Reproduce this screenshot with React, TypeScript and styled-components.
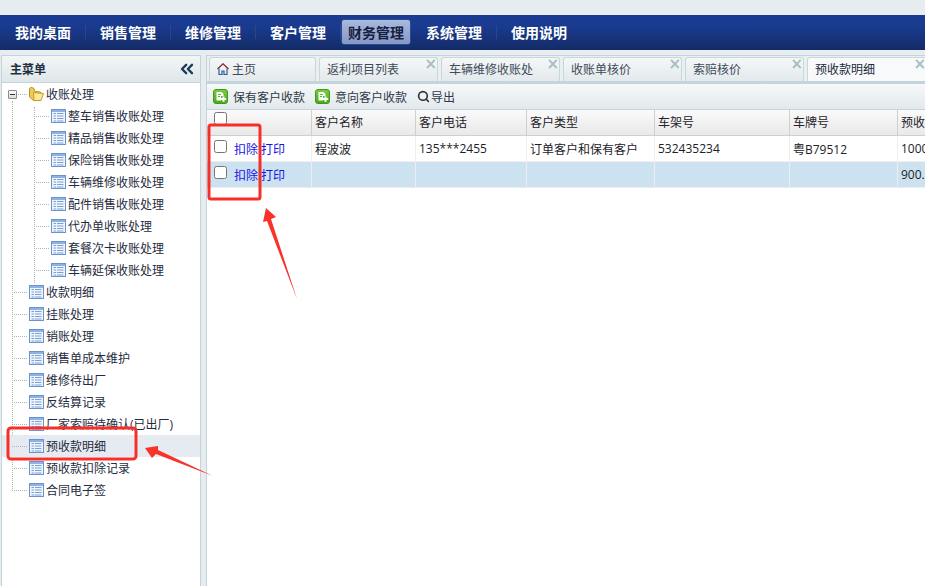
import React from "react";
import styled, { createGlobalStyle } from "styled-components";
import { ChevronsLeft, Search } from "lucide-react";

const GlobalStyle = createGlobalStyle`
  html, body {
    margin: 0;
    padding: 0;
    height: 100%;
    overflow: hidden;
    background: #e6ecef;
  }
  * { box-sizing: border-box; }
  #root {
    height: 586px;
    font-family: "Open Sans", "Noto Sans CJK SC", sans-serif;
    font-size: 12px;
    color: #1c2a3a;
  }
`;

const Page = styled.div`
  position: relative;
  width: 925px;
  height: 586px;
  padding-top: 15px;
  overflow: hidden;
`;

const NavBar = styled.nav`
  height: 35px;
  display: flex;
  align-items: center;
  padding-left: 7px;
  background: linear-gradient(#1a3c94, #1a3a8e 35%, #132b66);
`;

const NavItem = styled.div<{ $active?: boolean; $last?: boolean }>`
  position: relative;
  width: ${({ $active }) => ($active ? "70px" : "85px")};
  height: 26px;
  margin: ${({ $active }) => ($active ? "-1px 7px 0 -6px" : "-1px 0 0 0")};
  display: flex;
  align-items: center;
  padding-left: ${({ $active }) => ($active ? "6px" : "8px")};
  font-size: 14px;
  font-weight: 700;
  white-space: nowrap;
  color: ${({ $active }) => ($active ? "#14203c" : "#fff")};
  border-radius: 3px;
  background: ${({ $active }) =>
    $active ? "linear-gradient(#a9bade, #8597c6)" : "none"};
  border: ${({ $active }) => ($active ? "1px solid #2a4a90" : "none")};

  &::after {
    content: "";
    display: ${({ $active, $last }) => ($active || $last ? "none" : "block")};
    position: absolute;
    right: 6px;
    top: 6px;
    height: 14px;
    width: 1px;
    background: #2a4788;
  }
`;

const Body = styled.div`
  height: 536px;
  display: flex;
  padding: 5px 0 0 1px;
`;

const SidePanel = styled.aside`
  width: 200px;
  flex: none;
  background: #fff;
  border: 1px solid #c3d5da;
  border-bottom: none;
  display: flex;
  flex-direction: column;
`;

const SideHead = styled.div`
  height: 27px;
  flex: none;
  display: flex;
  align-items: center;
  justify-content: space-between;
  padding: 0 3px 0 8px;
  font-weight: 700;
  font-size: 12px;
  color: #203040;
  background: linear-gradient(#f2f6f7, #dfe7ea);
  border-bottom: 1px solid #c3d5da;
`;

const TreeBody = styled.div`
  position: relative;
`;

const TreeRow = styled.div<{ $level: number; $active?: boolean }>`
  position: relative;
  height: 22px;
  display: flex;
  align-items: center;
  gap: 2px;
  padding-left: ${({ $level }) => ($level === 2 ? "49px" : "27px")};
  white-space: nowrap;
  color: #1f2c3e;
  background: ${({ $active }) => ($active ? "#e6ebf2" : "none")};

  &::before {
    content: "";
    position: absolute;
    left: ${({ $level }) => ($level === 2 ? "32px" : "10px")};
    width: 15px;
    top: 11px;
    border-top: 1px dotted #b4b4b4;
  }
`;

const TreeLine = styled.div<{ $left: number; $top: number; $height: number }>`
  position: absolute;
  left: ${({ $left }) => $left}px;
  top: ${({ $top }) => $top}px;
  height: ${({ $height }) => $height}px;
  border-left: 1px dotted #b4b4b4;
`;

const ToggleBox = styled.span`
  position: absolute;
  left: 6px;
  top: 7px;
  width: 9px;
  height: 9px;
  z-index: 1;
  background: linear-gradient(#fff, #dcdcdc);
  border: 1px solid #8a8a8a;
  border-radius: 1px;

  &::after {
    content: "";
    position: absolute;
    left: 1px;
    right: 1px;
    top: 3px;
    height: 1px;
    background: #333;
  }
`;

const Splitter = styled.div`
  width: 5px;
  flex: none;
`;

const Main = styled.main`
  flex: 1;
  min-width: 0;
  background: #fff;
  border-left: 1px solid #c3d5da;
  display: flex;
  flex-direction: column;
`;

const TabStrip = styled.div`
  height: 29px;
  flex: none;
  display: flex;
  gap: 3px;
  padding: 1px 0 0 2px;
  border-top: 1px solid #c3d5da;
  border-bottom: 3px solid #c3d5da;
  background: #eaf0f2;
  overflow: hidden;
`;

const Tab = styled.div<{ $active?: boolean; $w: number }>`
  position: relative;
  flex: none;
  width: ${({ $w }) => $w}px;
  height: 25px;
  display: flex;
  align-items: center;
  gap: 3px;
  padding: 0 0 2px 7px;
  white-space: nowrap;
  border: 1px solid #c9d6da;
  border-bottom: none;
  border-radius: 3px 3px 0 0;
  color: ${({ $active }) => ($active ? "#1c2a3a" : "#3e4a58")};
  background: ${({ $active }) =>
    $active ? "#f7f9fa" : "linear-gradient(#f4f7f8, #e2e9ec)"};
`;

const TabClose = styled.span`
  position: absolute;
  right: 0;
  top: 0;
  line-height: 12px;
  font-size: 15px;
  font-weight: 700;
  font-family: "DejaVu Sans", sans-serif;
  color: #a6bcc4;
`;

const Toolbar = styled.div`
  height: 26px;
  flex: none;
  display: flex;
  align-items: center;
  padding: 0 0 0 6px;
  background: linear-gradient(#f6f8f9, #e3e9ec);
  border-bottom: 1px solid #c3d5da;
`;

const ToolButton = styled.div<{ $gap?: number }>`
  display: flex;
  align-items: center;
  gap: ${({ $gap }) => $gap ?? 5}px;
  margin-right: 10px;
  white-space: nowrap;
  color: #2d3a48;
`;

const GridBox = styled.div`
  overflow: hidden;
`;

const GridRow = styled.div<{ $kind: "head" | "plain" | "selected" }>`
  display: grid;
  grid-template-columns: 105px 104px 111px 128px 135px 108px 60px;
  height: 26px;
  width: 760px;
  background: ${({ $kind }) =>
    $kind === "head"
      ? "linear-gradient(#fafafa, #e9e9e9)"
      : $kind === "selected"
      ? "#cde2f0"
      : "#fff"};
  border-bottom: 1px solid ${({ $kind }) => ($kind === "head" ? "#cfcfcf" : "#eeeeee")};
`;

const Cell = styled.div<{ $head?: boolean }>`
  display: flex;
  align-items: center;
  gap: 6px;
  padding: 0 3px ${({ $head }) => ($head ? "2px" : "0")};
  white-space: nowrap;
  overflow: hidden;
  color: #1c2228;
  border-right: 1px solid ${({ $head }) => ($head ? "#cfcfcf" : "#eeeeee")};
`;

const CheckCell = styled(Cell)`
  padding-left: 7px;
`;

const Check = styled.span<{ $raised?: boolean }>`
  flex: none;
  width: 13px;
  height: 13px;
  margin-top: ${({ $raised }) => ($raised ? "-6px" : "-5px")};
  background: #fff;
  border: 1px solid #767676;
  border-radius: 2.5px;
`;

const Links = styled.span`
  display: flex;
  gap: 3px;
  margin-left: 1px;
  color: #1414e6;
`;

const Annotation = styled.svg`
  position: absolute;
  left: 0;
  top: 0;
  pointer-events: none;
`;

const TableIcon = () => (
  <svg width="15" height="14" viewBox="0 0 15 14">
    <rect x="0.5" y="0.5" width="14" height="13" fill="#eef4fc" stroke="#6a94cd" />
    <rect x="1" y="1" width="13" height="2" fill="#8fb2e2" />
    <path d="M2.5 4.5h10M2.5 7h10M2.5 9.5h10M2.5 12h10" stroke="#7aa2d8" strokeWidth="1.2" />
    <path d="M5.5 4v8.5" stroke="#eef4fc" strokeWidth="1" />
  </svg>
);

const FolderIcon = () => (
  <svg width="15" height="14" viewBox="0 0 15 14">
    <path d="M0.5 1.5V10l4 3.5h7V5L6 4.5 4.5 1 1.5 0.5z" fill="#edcb55" stroke="#b8902a" strokeWidth="1" />
    <path d="M4.5 5.5L14.5 6.5 12 13.5H5z" fill="#fcea8e" stroke="#c29a30" strokeWidth="1" />
  </svg>
);

const PageHomeIcon = () => (
  <svg width="12" height="12" viewBox="0 0 12 12" fill="none">
    <path d="M0.5 6L6 0.8 11.5 6" stroke="#8a2a2a" strokeWidth="1.3" />
    <path d="M2 5.5V11.5H5V8H7V11.5H10V5.5" stroke="#2a5a9a" strokeWidth="1.2" />
  </svg>
);

const AddIcon = () => (
  <svg width="15" height="15" viewBox="0 0 15 15">
    <defs>
      <linearGradient id="addGreen" x1="0" y1="0" x2="0" y2="1">
        <stop offset="0" stopColor="#7ad03c" />
        <stop offset="1" stopColor="#46a81c" />
      </linearGradient>
    </defs>
    <rect x="0.5" y="0.5" width="14" height="14" rx="2.5" fill="url(#addGreen)" stroke="#3f9a1a" />
    <path d="M3.5 3h5l2 2v2H8v4.5H3.5z" fill="#fff" />
    <path d="M10.5 7.5v5.2M8 10h5.2" stroke="#fff" strokeWidth="2" />
    <path d="M5 5.5h3M5 7.5h2" stroke="#5cb82a" strokeWidth="1" />
  </svg>
);

const subItems = [
  "整车销售收账处理",
  "精品销售收账处理",
  "保险销售收账处理",
  "车辆维修收账处理",
  "配件销售收账处理",
  "代办单收账处理",
  "套餐次卡收账处理",
  "车辆延保收账处理",
];

const topItems = [
  "收款明细",
  "挂账处理",
  "销账处理",
  "销售单成本维护",
  "维修待出厂",
  "反结算记录",
  "厂家索赔待确认(已出厂)",
  "预收款明细",
  "预收款扣除记录",
  "合同电子签",
];

const navItems = ["我的桌面", "销售管理", "维修管理", "客户管理", "财务管理", "系统管理", "使用说明"];

const tabs = ["返利项目列表", "车辆维修收账处", "收账单核价", "索赔核价"];

const columns = ["客户名称", "客户电话", "客户类型", "车架号", "车牌号", "预收款"];

const App: React.FC = () => {
  return (
    <Page>
      <GlobalStyle />
      <NavBar>
        {navItems.map((n, i) => (
          <NavItem key={n} $active={n === "财务管理"} $last={i === navItems.length - 1}>
            {n}
          </NavItem>
        ))}
      </NavBar>

      <Body>
        <SidePanel>
          <SideHead>
            主菜单
            <ChevronsLeft size={20} strokeWidth={2.8} color="#1d3a5c" />
          </SideHead>
          <TreeBody>
            <TreeLine $left={10} $top={18} $height={390} />
            <TreeLine $left={32} $top={24} $height={176} />
            <TreeRow $level={1}>
              <ToggleBox />
              <FolderIcon />
              收账处理
            </TreeRow>
            {subItems.map((s) => (
              <TreeRow key={s} $level={2}>
                <TableIcon />
                {s}
              </TreeRow>
            ))}
            {topItems.map((s) => (
              <TreeRow key={s} $level={1} $active={s === "预收款明细"}>
                <TableIcon />
                {s}
              </TreeRow>
            ))}
          </TreeBody>
        </SidePanel>

        <Splitter />

        <Main>
          <TabStrip>
            <Tab $w={107}>
              <PageHomeIcon />
              主页
            </Tab>
            {tabs.map((t) => (
              <Tab key={t} $w={119}>
                {t}
                <TabClose>×</TabClose>
              </Tab>
            ))}
            <Tab $w={120} $active>
              预收款明细
              <TabClose>×</TabClose>
            </Tab>
          </TabStrip>

          <Toolbar>
            <ToolButton>
              <AddIcon />
              保有客户收款
            </ToolButton>
            <ToolButton>
              <AddIcon />
              意向客户收款
            </ToolButton>
            <ToolButton $gap={1}>
              <Search size={13} strokeWidth={3} color="#333" />
              导出
            </ToolButton>
          </Toolbar>

          <GridBox>
            <GridRow $kind="head">
              <CheckCell $head>
                <Check $raised />
              </CheckCell>
              {columns.map((c) => (
                <Cell key={c} $head>
                  {c}
                </Cell>
              ))}
            </GridRow>
            <GridRow $kind="plain">
              <CheckCell>
                <Check />
                <Links>
                  <span>扣除</span>
                  <span>打印</span>
                </Links>
              </CheckCell>
              <Cell>程波波</Cell>
              <Cell>135***2455</Cell>
              <Cell>订单客户和保有客户</Cell>
              <Cell>532435234</Cell>
              <Cell>粤B79512</Cell>
              <Cell>1000.00</Cell>
            </GridRow>
            <GridRow $kind="selected">
              <CheckCell>
                <Check />
                <Links>
                  <span>扣除</span>
                  <span>打印</span>
                </Links>
              </CheckCell>
              <Cell />
              <Cell />
              <Cell />
              <Cell />
              <Cell />
              <Cell>900.00</Cell>
            </GridRow>
          </GridBox>
        </Main>
      </Body>

      {/* red marks drawn over the screenshot */}
      <Annotation width="925" height="586" viewBox="0 0 925 586">
        <rect x="209" y="125" width="51" height="74" rx="2" fill="none" stroke="#f5302a" strokeWidth="3" />
        <rect x="8" y="428" width="128" height="31" rx="3" fill="none" stroke="#f5302a" strokeWidth="3" />
        <path d="M266 208L276 217L271 219L297 299L267 221L263 222z" fill="#f9322a" />
        <path d="M145 448L158 446L158 450L213 476L156 454L152 458z" fill="#f9322a" />
      </Annotation>
    </Page>
  );
};

export default App;
